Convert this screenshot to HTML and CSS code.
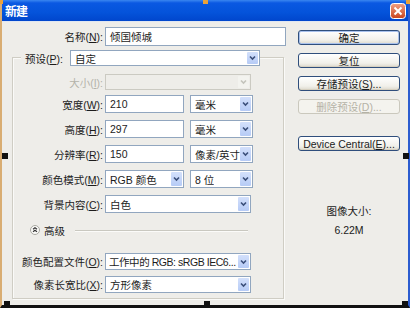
FILE: index.html
```html
<!DOCTYPE html>
<html lang="zh-CN">
<head>
  <meta charset="UTF-8">
  <title>新建</title>
  <link rel="stylesheet" href="styles.css">
</head>
<body>
  <div class="window">
    <div class="titlebar">
      <span class="title">新建</span>
      <svg class="close" width="16" height="16" viewBox="0 0 16 16">
        <defs>
          <linearGradient id="cg" x1="0" y1="0" x2="0" y2="1">
            <stop offset="0" stop-color="#f0a184"/>
            <stop offset="1" stop-color="#c9431c"/>
          </linearGradient>
        </defs>
        <rect x="0.5" y="0.5" width="15" height="15" rx="3" fill="url(#cg)" stroke="#fff"/>
        <path d="M4.5 4.5 L11.5 11.5 M11.5 4.5 L4.5 11.5" stroke="#fff" stroke-width="2"/>
      </svg>
    </div>

    <div class="content">
      <div class="main">
        <div class="name-row">
          <span class="label wide">名称(<u>N</u>):</span>
          <div class="field name">倾国倾城</div>
        </div>

        <div class="group">
          <div class="preset-row">
            <span class="legend">预设(<u>P</u>):</span>
            <div class="field select preset"><span>自定</span><i class="arrow"><svg width="11" height="12" viewBox="0 0 11 12"><path d="M3 4.5 L5.5 7 L8 4.5" fill="none" stroke="#3b4f7a" stroke-width="1.6"/></svg></i></div>
          </div>

          <div class="row small">
            <span class="label off">大小(<u>I</u>):</span>
            <div class="field select full disabled"><span></span><i class="arrow"><svg width="11" height="12" viewBox="0 0 11 12"><path d="M3 4.5 L5.5 7 L8 4.5" fill="none" stroke="#c4c4bc" stroke-width="1.6"/></svg></i></div>
          </div>

          <div class="row">
            <span class="label">宽度(<u>W</u>):</span>
            <div class="field num">210</div>
            <div class="field select unit"><span>毫米</span><i class="arrow"><svg width="11" height="12" viewBox="0 0 11 12"><path d="M3 4.5 L5.5 7 L8 4.5" fill="none" stroke="#3b4f7a" stroke-width="1.6"/></svg></i></div>
          </div>

          <div class="row">
            <span class="label">高度(<u>H</u>):</span>
            <div class="field num">297</div>
            <div class="field select unit"><span>毫米</span><i class="arrow"><svg width="11" height="12" viewBox="0 0 11 12"><path d="M3 4.5 L5.5 7 L8 4.5" fill="none" stroke="#3b4f7a" stroke-width="1.6"/></svg></i></div>
          </div>

          <div class="row">
            <span class="label">分辨率(<u>R</u>):</span>
            <div class="field num">150</div>
            <div class="field select unit"><span>像素/英寸</span><i class="arrow"><svg width="11" height="12" viewBox="0 0 11 12"><path d="M3 4.5 L5.5 7 L8 4.5" fill="none" stroke="#3b4f7a" stroke-width="1.6"/></svg></i></div>
          </div>

          <div class="row">
            <span class="label">颜色模式(<u>M</u>):</span>
            <div class="field select num"><span>RGB 颜色</span><i class="arrow"><svg width="11" height="12" viewBox="0 0 11 12"><path d="M3 4.5 L5.5 7 L8 4.5" fill="none" stroke="#3b4f7a" stroke-width="1.6"/></svg></i></div>
            <div class="field select unit"><span>8 位</span><i class="arrow"><svg width="11" height="12" viewBox="0 0 11 12"><path d="M3 4.5 L5.5 7 L8 4.5" fill="none" stroke="#3b4f7a" stroke-width="1.6"/></svg></i></div>
          </div>

          <div class="row">
            <span class="label">背景内容(<u>C</u>):</span>
            <div class="field select full"><span>白色</span><i class="arrow"><svg width="11" height="12" viewBox="0 0 11 12"><path d="M3 4.5 L5.5 7 L8 4.5" fill="none" stroke="#3b4f7a" stroke-width="1.6"/></svg></i></div>
          </div>

          <div class="advanced">
            <svg width="10" height="10" viewBox="0 0 10 10">
              <circle cx="5" cy="5" r="4.5" fill="#fafaf8" stroke="#a9a9a2"/>
              <path d="M3 4.2 L5 2.6 L7 4.2 M3 6.8 L5 5.2 L7 6.8" fill="none" stroke="#333" stroke-width="1.1"/>
            </svg>
            <span>高级</span>
            <div class="rule"></div>
          </div>

          <div class="row tight">
            <span class="label">颜色配置文件(<u>O</u>):</span>
            <div class="field select full profile"><span>工作中的 RGB: sRGB IEC6...</span><i class="arrow"><svg width="11" height="12" viewBox="0 0 11 12"><path d="M3 4.5 L5.5 7 L8 4.5" fill="none" stroke="#3b4f7a" stroke-width="1.6"/></svg></i></div>
          </div>

          <div class="row tight last">
            <span class="label">像素长宽比(<u>X</u>):</span>
            <div class="field select full"><span>方形像素</span><i class="arrow"><svg width="11" height="12" viewBox="0 0 11 12"><path d="M3 4.5 L5.5 7 L8 4.5" fill="none" stroke="#3b4f7a" stroke-width="1.6"/></svg></i></div>
          </div>
        </div>
      </div>

      <div class="side">
        <div class="btn default">确定</div>
        <div class="btn">复位</div>
        <div class="btn">存储预设(<u>S</u>)...</div>
        <div class="btn disabled">删除预设(<u>D</u>)...</div>
        <div class="btn central">Device Central(<u>E</u>)...</div>
        <div class="size-title">图像大小:</div>
        <div class="size-value">6.22M</div>
      </div>
    </div>

    <i class="handle tl"></i><i class="handle tc"></i><i class="handle tr"></i>
    <i class="handle ml"></i><i class="handle mr"></i>
    <i class="handle bl"></i><i class="handle bc"></i><i class="handle br"></i>
  </div>
</body>
</html>
```

FILE: styles.css
```css
* { box-sizing:border-box; }
html, body { margin:0; padding:0; background:#fff; }
body {
  font-family:"Liberation Sans","Noto Sans CJK SC",sans-serif;
  font-size:10.5px; color:#1c1c1c;
}
u { text-decoration:underline; text-underline-offset:1px; }

.window {
  position:relative; width:410px; height:308px;
  border-left:2px solid #d9ad72; border-right:2px solid #2b5ccf; border-bottom:3px solid #111;
  background:#eeede9; display:flex; flex-direction:column;
}

/* title bar */
.titlebar {
  height:22px; flex:none; display:flex; align-items:center; justify-content:space-between;
  padding:0 2px 0 3px;
  background:linear-gradient(#3a86f0 0, #0a58e2 3px, #0453da 60%, #0046cc 100%);
  border-bottom:1px solid #dfe6f2;
}
.title { color:#fff; font-weight:bold; font-size:12px; letter-spacing:-1px; }
.close { display:block; }

/* body */
.content { display:flex; padding-top:5px; flex:1; }
.main { width:284px; flex:none; }

.name-row { display:flex; align-items:center; gap:2px; height:19px; }
.label { width:90px; flex:none; text-align:right; white-space:nowrap; }
.label.wide { width:101px; }
.label.off { color:#b4b3aa; }

.field {
  height:100%; background:#fff; border:1px solid #91a6bf;
  display:flex; align-items:center; padding-left:4px; white-space:nowrap; overflow:hidden;
}
.field.name { width:181px; }
.field.num { width:79px; }
.field.unit { width:63px; margin-left:4px; }
.field.full { width:146px; }
.field.preset { width:190px; }
.field.disabled { background:#eeede9; border-color:#cbcac2; }
.field.profile { padding-left:3px; }
.field.profile span { letter-spacing:-0.45px; }

.select { justify-content:space-between; padding-right:1px; }
.select span { overflow:hidden; }
.arrow {
  flex:none; width:11px; height:calc(100% - 2px); display:flex; align-items:center; justify-content:center;
  background:linear-gradient(#d3e0fb, #b6cbf6); border-radius:1px;
}
.disabled .arrow { background:#f3f3ef; }

/* preset group */
.group {
  margin:11px 0 0 10px; width:272px; height:242px;
  border:1px solid #cfcdc4; box-shadow:inset 1px 1px 0 #fafaf8, 1px 1px 0 #fafaf8;
}
.preset-row { display:flex; align-items:center; height:16px; margin:-8px 0 0 8px; }
.legend { width:49px; flex:none; padding-left:4px; background:#eeede9; white-space:nowrap; }

.row { display:flex; align-items:center; gap:2px; height:18px; margin-top:7px; }
.row.small { height:16px; margin-top:8px; }
.row.small + .row { margin-top:5px; }
.row.tight { height:17px; margin-top:6px; }

.advanced { display:flex; align-items:center; height:12px; margin:11px 0 17px 17px; }
.advanced svg { display:block; }
.advanced span { margin-left:4px; }
.advanced .rule { width:173px; height:1px; margin-left:10px; background:#c9c8c0; box-shadow:0 1px 0 #fbfbf9; }
.advanced + .row { margin-top:0; }

/* right column */
.side { width:102px; margin-left:12px; padding-top:3px; display:flex; flex-direction:column; }
.btn {
  height:15px; margin-bottom:8px; display:flex; align-items:center; justify-content:center;
  border:1px solid #2f4e7c; border-radius:3px; white-space:nowrap;
  background:linear-gradient(#ffffff, #f1f0ea 70%, #dcd8cc);
  box-shadow:inset 0 -1px 0 #d6d0c0;
}
.btn.default { box-shadow:inset 0 0 0 1px #a8c1ec, inset 0 -1px 0 #8eaee6; }
.btn.disabled { border-color:#cac8bd; color:#b4b2a6; background:#f4f3ee; box-shadow:none; }
.btn.central { margin-top:14px; }
.size-title { margin-top:45px; text-align:center; line-height:14px; }
.size-value { margin-top:5px; text-align:center; line-height:14px; }

/* selection handles of the pasted picture */
.handle { position:absolute; width:6px; height:6px; background:#111; }
.handle.tl, .handle.tc, .handle.tr { height:4px; top:0; background:#e9a23a; }
.handle.tl { left:-2px; width:3px; }
.handle.tc { left:201px; width:5px; }
.handle.tr { right:-2px; width:4px; }
.handle.ml { left:0; top:153px; }
.handle.mr { right:-1px; top:153px; }
.handle.bl { left:2px; bottom:-3px; height:7px; }
.handle.bc { left:202px; bottom:-3px; height:7px; }
.handle.br { right:0; bottom:-3px; height:7px; }
```
